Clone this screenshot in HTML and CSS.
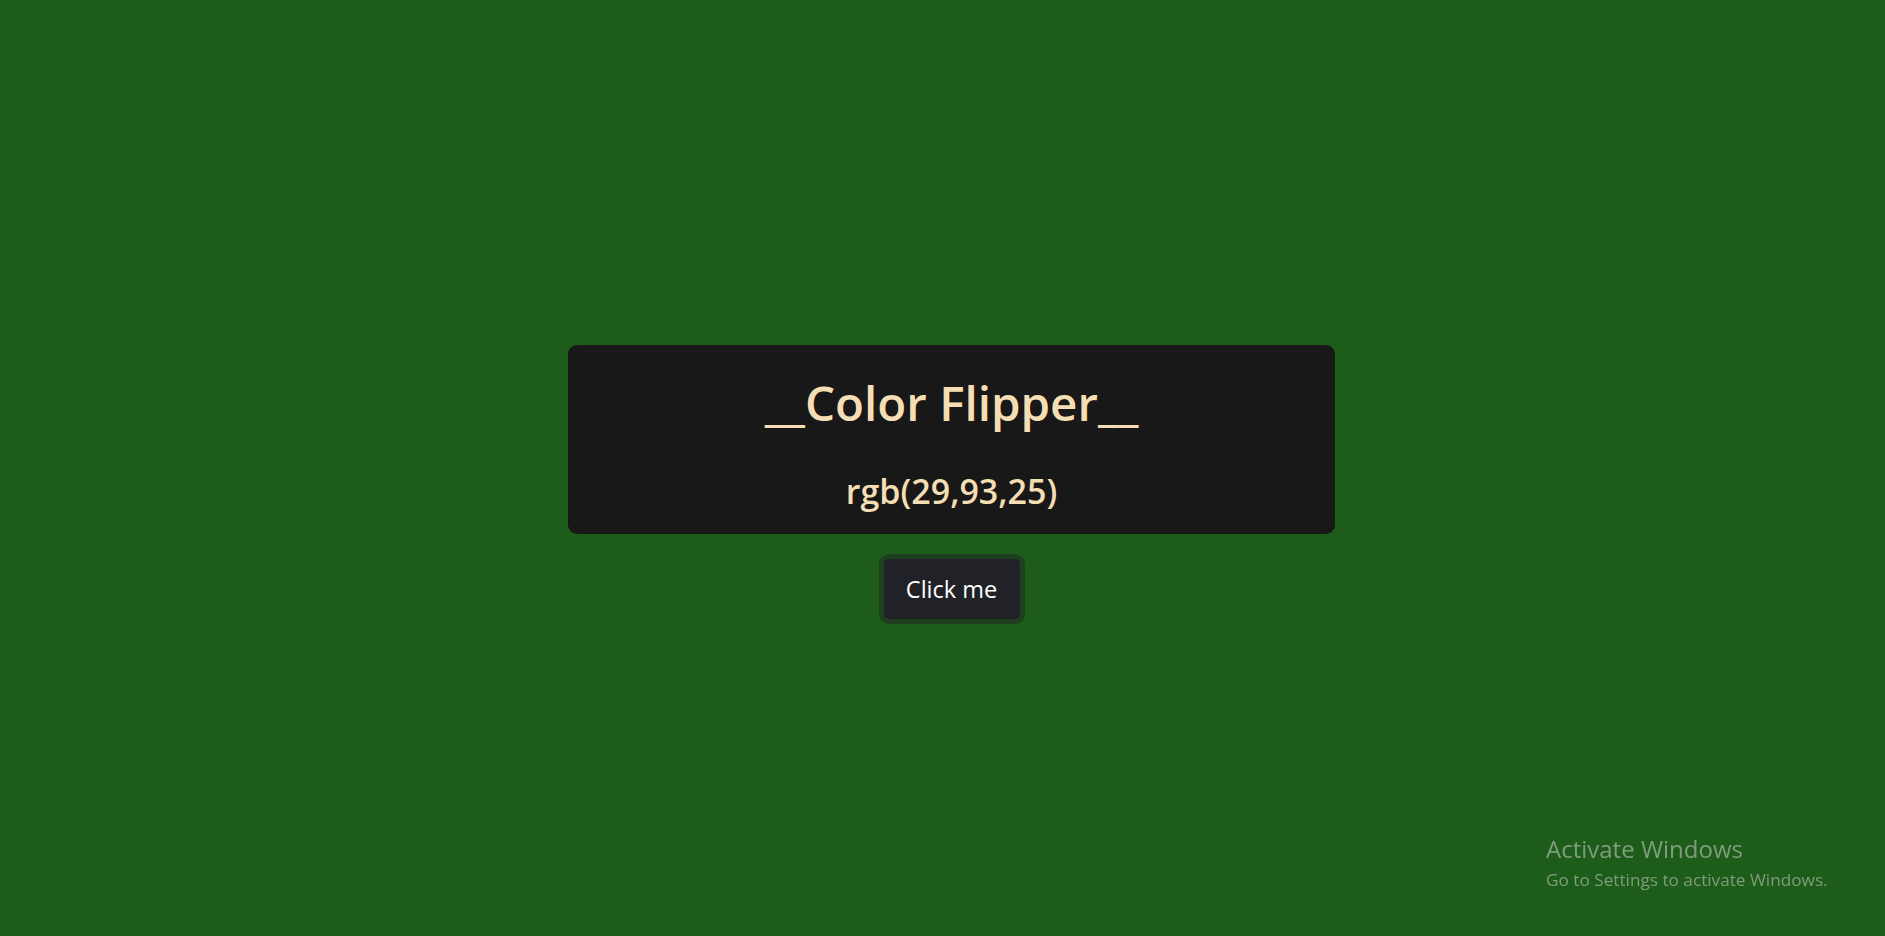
FILE: index.html
```html
<!DOCTYPE html>
<html lang="en">
<head>
<meta charset="utf-8">
<title>Color Flipper</title>
<link rel="stylesheet" href="styles.css">
</head>
<body>
<main class="page">
  <section class="card">
    <h1 class="title">__Color Flipper__</h1>
    <h2 class="value">rgb(29,93,25)</h2>
  </section>
  <button class="btn" type="button">Click me</button>
</main>
<div class="watermark">
  <div class="wm-title">Activate Windows</div>
  <div class="wm-sub">Go to Settings to activate Windows.</div>
</div>
</body>
</html>
```

FILE: styles.css
```css
html, body {
  margin: 0;
  padding: 0;
}
body {
  background: #1d5d19;
  min-height: 100vh;
  font-family: "Open Sans", "Noto Sans", sans-serif;
  overflow: hidden;
}
.page {
  display: flex;
  flex-direction: column;
  align-items: center;
  padding-top: 345px;
  padding-left: 18px;
}
.card {
  box-sizing: border-box;
  width: 767px;
  height: 189px;
  background: #181818;
  border-radius: 9px;
  padding-top: 28px;
  display: flex;
  flex-direction: column;
  align-items: center;
}
.title {
  margin: 0;
  font-size: 47.5px;
  line-height: 60px;
  font-weight: 600;
  color: #f5deb3;
}
.value {
  margin: 38px 0 0;
  font-size: 34px;
  line-height: 40px;
  font-weight: 600;
  color: #f5deb3;
}
.btn {
  margin-top: 20px;
  box-sizing: border-box;
  width: 146px;
  height: 70px;
  background: #202228;
  border: 5px solid #1f3f1e;
  border-radius: 10px;
  color: #ffffff;
  font-family: "Open Sans", "Noto Sans", sans-serif;
  font-size: 23.5px;
  padding: 0;
}
.watermark {
  position: fixed;
  left: 1546px;
  top: 834px;
  color: #7f9c7d;
  font-family: "Open Sans", "Noto Sans", sans-serif;
}
.wm-title {
  font-size: 24px;
  line-height: 30px;
}
.wm-sub {
  font-size: 17.2px;
  line-height: 31px;
}
```
